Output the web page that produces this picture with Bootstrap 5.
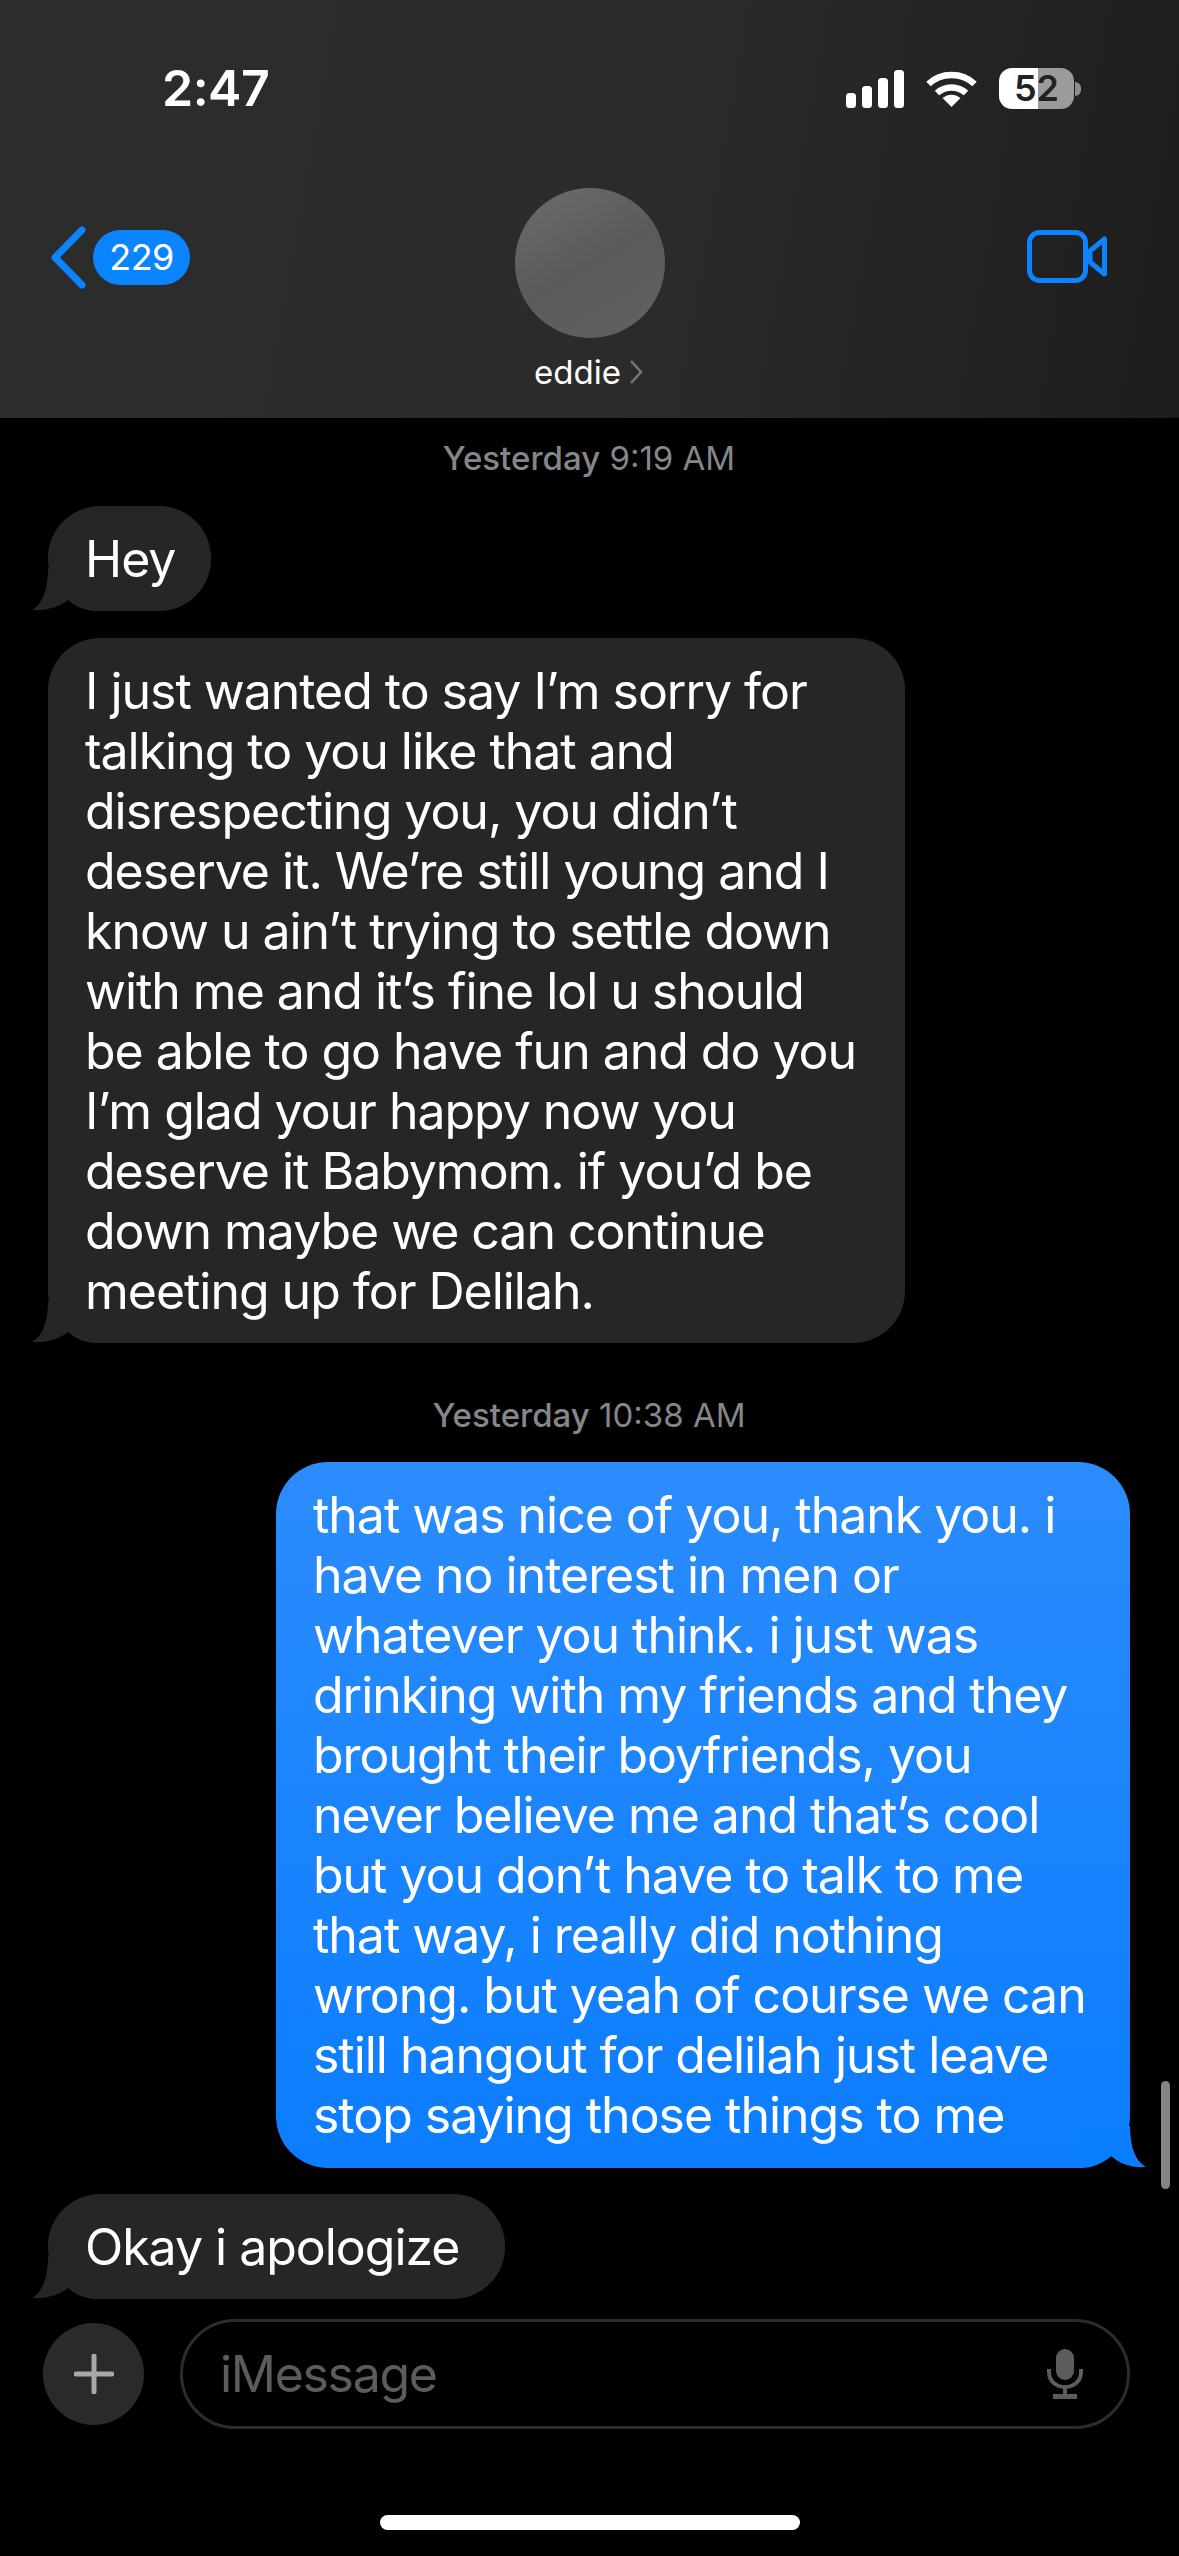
<!DOCTYPE html>
<html lang="en">

<head>
  <meta charset="UTF-8">
  <title>Messages</title>
  <link href="https://cdn.jsdelivr.net/npm/bootstrap@5.3.2/dist/css/bootstrap.min.css" rel="stylesheet" />
  <style>
    html, body { background: #000; }
    body { width: 1179px; height: 2556px; overflow: hidden; position: relative; font-family: "Inter", "Liberation Sans", sans-serif; color: #fff; }

    .top-head { height: 418px; background: linear-gradient(100deg, #2c2c2d 0%, #2b2b2c 55%, #1d1d1e 100%); }
    .status-row { height: 188px; padding: 68px 98px 0 162px; }
    .clock { font-size: 50px; line-height: 40px; font-weight: 600; letter-spacing: -0.5px; }
    .status-icons { gap: 22px; }
    .batt { width: 75px; height: 41px; border-radius: 13px; background: linear-gradient(90deg, #fff 52%, #9b9b9b 52%); color: #222; font-size: 36px; line-height: 41px; font-weight: 600; text-align: center; }
    .batt-nub { width: 6px; height: 14px; background: #8e8e8e; border-radius: 0 6px 6px 0; margin-left: 1px; }

    .nav-side { width: 300px; }
    .nav-left { padding: 38px 0 0 50px; gap: 7px; }
    .nav-right { padding: 42px 72px 0 0; }
    .count-pill { width: 97px; height: 55px; background: #0a84ff; font-size: 36px; line-height: 55px; letter-spacing: -0.6px; text-align: center; border-radius: 28px; }
    .avatar-disc { width: 150px; height: 150px; background: linear-gradient(150deg, #6d6d6d 0%, #5a5a5a 50%, #626262 100%); }
    .contact { font-size: 33px; line-height: 40px; margin-top: 14px; gap: 8px; margin-left: -2px; }

    .stamp { font-size: 33px; line-height: 40px; color: #86868a; text-align: center; }
    .stamp b { font-weight: 500; }
    .stamp-first { padding-top: 20px; height: 88px; }
    .stamp-second { padding-top: 52px; height: 119px; }

    .thread { padding: 0 49px 0 48px; }
    .bubble-wrap { font-size: 50px; line-height: 60px; letter-spacing: -1.03px; padding: 23px 37px 22px; border-radius: 52px; position: relative; }
    .bubble-in { background: #262629; }
    .bubble-out { background: linear-gradient(180deg, #2b8cfc 0%, #0b7dff 100%); margin-left: auto; width: 854px; padding-bottom: 23px; }
    .bubble-text { position: relative; z-index: 1; }
    .tail-in { position: absolute; left: -16px; bottom: 0; }
    .tail-out { position: absolute; right: -16px; bottom: 0; }
    .size-hey { width: 163px; margin-bottom: 27px; }
    .size-long { width: 857px; }
    .size-okay { width: 457px; margin-top: 26px; }

    .compose { padding: 20px 49px 0 43px; gap: 36px; }
    .plus-disc { width: 101px; height: 102px; background: #2a2a2c; flex: none; }
    .field { height: 110px; border: 3px solid #2c2c2e; border-radius: 55px; padding: 0 44px 0 37px; font-size: 50px; letter-spacing: -1.3px; color: #5c5c5f; }
    .home-pill { width: 420px; height: 15px; background: #fff; margin: 86px auto 0; }
    .scroll-thumb { position: absolute; left: 1161px; top: 2081px; width: 9px; height: 108px; background: #858585; border-radius: 5px; }
    .bottom-fade { position: absolute; left: 0; top: 2300px; width: 1179px; height: 256px; background: radial-gradient(ellipse at 50% 75%, #0c0e0f 0%, #000 70%); z-index: -1; }
  </style>
</head>

<body>
  <header class="top-head">
    <div class="status-row d-flex justify-content-between align-items-start">
      <div class="clock">2:47</div>
      <div class="status-icons d-flex align-items-center">
        <svg width="58" height="38" viewBox="0 0 58 38" fill="#fff">
          <rect x="0" y="23" width="10" height="15" rx="3.5" />
          <rect x="16" y="16" width="10" height="22" rx="3.5" />
          <rect x="32" y="8" width="10" height="30" rx="3.5" />
          <rect x="48" y="0" width="10" height="38" rx="3.5" />
        </svg>
        <svg width="51" height="38" viewBox="0 0 51 38" fill="none" stroke="#fff" stroke-width="6.5">
          <path d="M2.5 14 C15 2 36 2 48.5 14" />
          <path d="M11 23 C19 15.5 32 15.5 40 23" />
          <path d="M16.5 28 L25.5 37 L34.5 28 C29 23.5 22 23.5 16.5 28 Z" fill="#fff" stroke="none" />
        </svg>
        <div class="d-flex align-items-center">
          <div class="batt">52</div>
          <div class="batt-nub"></div>
        </div>
      </div>
    </div>

    <div class="d-flex justify-content-between align-items-start">
      <div class="nav-side nav-left d-flex align-items-center">
        <svg width="36" height="63" viewBox="0 0 36 63" fill="none" stroke="#0a84ff" stroke-width="7" stroke-linecap="round" stroke-linejoin="round">
          <polyline points="32,4 5,31.5 32,59" />
        </svg>
        <div class="count-pill">229</div>
      </div>
      <div class="d-flex flex-column align-items-center">
        <div class="avatar-disc rounded-circle"></div>
        <div class="contact d-flex align-items-center">
          <span>eddie</span>
          <svg width="14" height="24" viewBox="0 0 14 24" fill="none" stroke="#77777a" stroke-width="2.5">
            <polyline points="2,1 12,12 2,23" />
          </svg>
        </div>
      </div>
      <div class="nav-side nav-right d-flex justify-content-end">
        <svg width="80" height="53" viewBox="0 0 80 53" fill="none" stroke="#0a84ff" stroke-width="5" stroke-linejoin="round">
          <rect x="2.5" y="2.5" width="56" height="48" rx="10" />
          <path d="M63 21 L77.5 9 V44 L63 32 Z" />
        </svg>
      </div>
    </div>
  </header>

  <main class="thread">
    <div class="stamp stamp-first"><b>Yesterday</b> 9:19 AM</div>

    <div class="bubble-wrap bubble-in size-hey">
      <div class="bubble-text">Hey</div>
      <svg class="tail-in" width="64" height="42" viewBox="0 0 64 42" fill="#262629">
        <path d="M16 0 C16 20 11 35 0 41 C14 42 27 38 36 31 C44 38 54 42 64 42 L64 0 Z" />
      </svg>
    </div>

    <div class="bubble-wrap bubble-in size-long">
      <div class="bubble-text">
        I just wanted to say I’m sorry for<br>
        talking to you like that and<br>
        disrespecting you, you didn’t<br>
        deserve it. We’re still young and I<br>
        know u ain’t trying to settle down<br>
        with me and it’s fine lol u should<br>
        be able to go have fun and do you<br>
        I’m glad your happy now you<br>
        deserve it Babymom. if you’d be<br>
        down maybe we can continue<br>
        meeting up for Delilah.
      </div>
      <svg class="tail-in" width="64" height="42" viewBox="0 0 64 42" fill="#262629">
        <path d="M16 0 C16 20 11 35 0 41 C14 42 27 38 36 31 C44 38 54 42 64 42 L64 0 Z" />
      </svg>
    </div>

    <div class="stamp stamp-second"><b>Yesterday</b> 10:38 AM</div>

    <div class="bubble-wrap bubble-out">
      <div class="bubble-text">
        that was nice of you, thank you. i<br>
        have no interest in men or<br>
        whatever you think. i just was<br>
        drinking with my friends and they<br>
        brought their boyfriends, you<br>
        never believe me and that’s cool<br>
        but you don’t have to talk to me<br>
        that way, i really did nothing<br>
        wrong. but yeah of course we can<br>
        still hangout for delilah just leave<br>
        stop saying those things to me
      </div>
      <svg class="tail-out" width="66" height="42" viewBox="0 0 66 42" fill="#0b7dff">
        <path d="M50 0 C50 20 55 35 66 41 C52 42 40 38 31 30 C22 38 12 42 0 42 L0 0 Z" />
      </svg>
    </div>

    <div class="bubble-wrap bubble-in size-okay">
      <div class="bubble-text">Okay i apologize</div>
      <svg class="tail-in" width="64" height="42" viewBox="0 0 64 42" fill="#262629">
        <path d="M16 0 C16 20 11 35 0 41 C14 42 27 38 36 31 C44 38 54 42 64 42 L64 0 Z" />
      </svg>
    </div>
  </main>

  <div class="compose d-flex align-items-center">
    <div class="plus-disc rounded-circle d-flex align-items-center justify-content-center">
      <svg width="40" height="40" viewBox="0 0 40 40" fill="none" stroke="#a8a8a8" stroke-width="5" stroke-linecap="round">
        <path d="M20 2 V38 M2 20 H38" />
      </svg>
    </div>
    <div class="field flex-grow-1 d-flex align-items-center justify-content-between">
      <span>iMessage</span>
      <svg width="36" height="50" viewBox="0 0 36 50" fill="none" stroke="#5c5c5f" stroke-width="4">
        <rect x="9" y="0" width="18" height="31" rx="9" fill="#5c5c5f" stroke="none" />
        <path d="M2 20 V23 C2 32 9 38 18 38 C27 38 34 32 34 23 V20" />
        <path d="M18 38 V46" />
        <rect x="6" y="45" width="24" height="5" fill="#5c5c5f" stroke="none" />
      </svg>
    </div>
  </div>

  <div class="home-pill rounded-pill"></div>
  <div class="scroll-thumb"></div>
  <div class="bottom-fade"></div>

  <script src="https://cdn.jsdelivr.net/npm/bootstrap@5.3.2/dist/js/bootstrap.bundle.min.js"></script>
</body>

</html>
